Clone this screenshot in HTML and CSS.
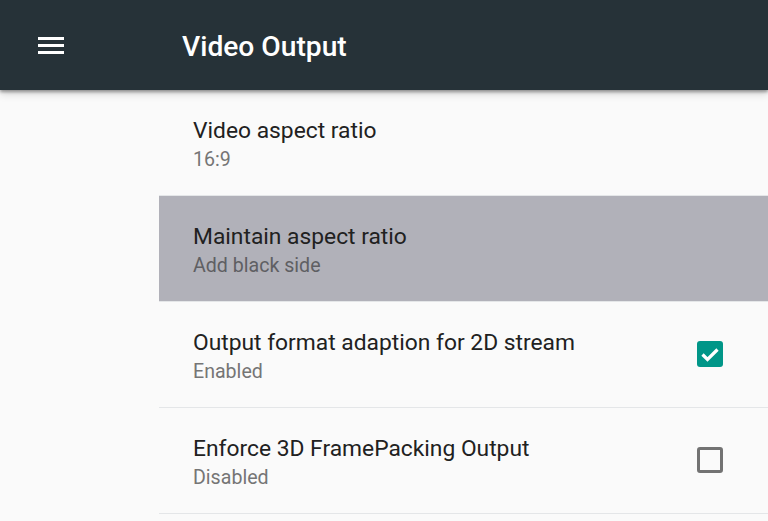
FILE: index.html
```html
<!DOCTYPE html>
<html>
<head>
<meta charset="utf-8">
<link rel="stylesheet" href="styles.css">
</head>
<body>
<header class="appbar">
  <div class="menu">
    <svg width="26" height="18" viewBox="0 0 26 18"><rect x="0" y="1" width="26" height="3" fill="#fff"/><rect x="0" y="8" width="26" height="3" fill="#fff"/><rect x="0" y="15" width="26" height="3" fill="#fff"/></svg>
  </div>
  <h1 class="title">Video Output</h1>
</header>
<main class="content">
  <ul class="list">
    <li class="item">
      <div class="text"><div class="primary">Video aspect ratio</div><div class="secondary">16:9</div></div>
    </li>
    <li class="item selected">
      <div class="text"><div class="primary">Maintain aspect ratio</div><div class="secondary">Add black side</div></div>
    </li>
    <li class="item">
      <div class="text"><div class="primary">Output format adaption for 2D stream</div><div class="secondary">Enabled</div></div>
      <div class="check on"><svg width="26" height="26" viewBox="0 0 26 26"><path d="M5.5 13.5l5 5L20.5 8.5" fill="none" stroke="#fff" stroke-width="3.2"/></svg></div>
    </li>
    <li class="item">
      <div class="text"><div class="primary">Enforce 3D FramePacking Output</div><div class="secondary">Disabled</div></div>
      <div class="check off"></div>
    </li>
  </ul>
</main>
</body>
</html>
```
FILE: styles.css
```css
* { box-sizing: border-box; }
html, body { margin: 0; padding: 0; }
body {
  width: 768px;
  height: 521px;
  overflow: hidden;
  background: #fafafa;
  font-family: Roboto, "Noto Sans", sans-serif;
}
.appbar {
  height: 90px;
  background: #263238;
  display: flex;
  align-items: center;
  position: relative;
  z-index: 2;
  box-shadow: 0 2px 3px rgba(0,0,0,0.35), 0 4px 8px rgba(0,0,0,0.15);
}
.menu {
  width: 182px;
  padding-left: 38px;
  display: flex;
  align-items: center;
  height: 18px;
  margin-top: -1px;
}
.menu svg { display: block; }
.title {
  margin: 0;
  color: #fff;
  font-size: 28.2px;
  font-weight: 500;
  margin-top: 2px;
}
.content {
  padding-left: 159px;
}
.list {
  list-style: none;
  margin: 0;
  padding: 0;
}
.item {
  height: 106px;
  border-bottom: 1px solid #e4e6e8;
  display: flex;
  align-items: center;
  padding-left: 34px;
  padding-right: 45px;
}
.item.selected { background: #b1b1b9; }
.text { flex: 1; margin-top: 4px; }
.primary {
  font-size: 22.8px;
  color: #212121;
  line-height: 30px;
}
.secondary {
  font-size: 19.6px;
  color: #757575;
  line-height: 28px;
}
.selected .secondary { color: #5f5f63; }
.check {
  width: 26px;
  height: 26px;
  border-radius: 3px;
  margin-top: -1px;
}
.check.on { background: #009688; }
.check.on svg { display: block; }
.check.off { border: 3px solid #727272; }
```
